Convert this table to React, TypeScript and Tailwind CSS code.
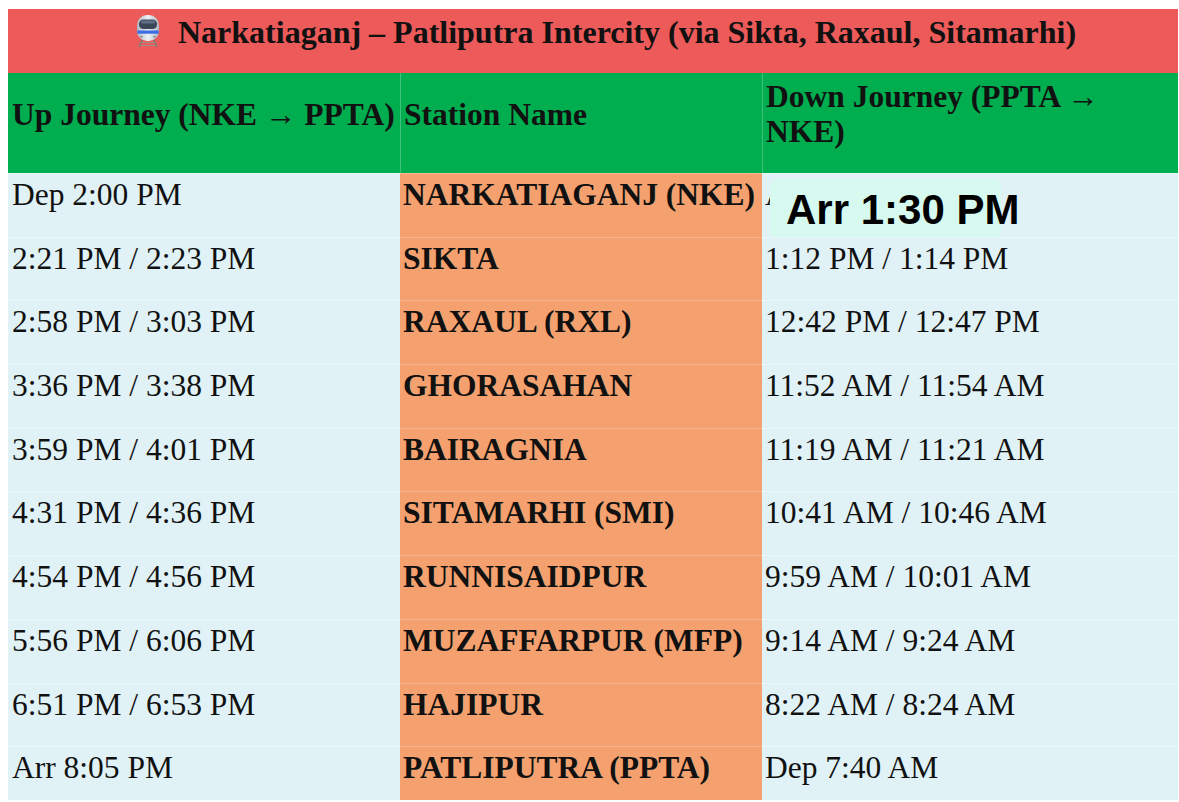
const rows: [string, string, string][] = [
  ["Dep 2:00 PM", "NARKATIAGANJ (NKE)", "Arr 1:30 PM"],
  ["2:21 PM / 2:23 PM", "SIKTA", "1:12 PM / 1:14 PM"],
  ["2:58 PM / 3:03 PM", "RAXAUL (RXL)", "12:42 PM / 12:47 PM"],
  ["3:36 PM / 3:38 PM", "GHORASAHAN", "11:52 AM / 11:54 AM"],
  ["3:59 PM / 4:01 PM", "BAIRAGNIA", "11:19 AM / 11:21 AM"],
  ["4:31 PM / 4:36 PM", "SITAMARHI (SMI)", "10:41 AM / 10:46 AM"],
  ["4:54 PM / 4:56 PM", "RUNNISAIDPUR", "9:59 AM / 10:01 AM"],
  ["5:56 PM / 6:06 PM", "MUZAFFARPUR (MFP)", "9:14 AM / 9:24 AM"],
  ["6:51 PM / 6:53 PM", "HAJIPUR", "8:22 AM / 8:24 AM"],
  ["Arr 8:05 PM", "PATLIPUTRA (PPTA)", "Dep 7:40 AM"],
];

function TrainIcon() {
  return (
    <svg width="36" height="36" viewBox="0 0 36 36" className="shrink-0">
      <defs>
        <linearGradient id="body" x1="0" y1="0" x2="1" y2="0">
          <stop offset="0" stopColor="#aeb7c1" />
          <stop offset="0.5" stopColor="#eef1f4" />
          <stop offset="1" stopColor="#aeb7c1" />
        </linearGradient>
      </defs>
      {/* rails */}
      <path d="M9 34 L12 27 M27 34 L24 27" stroke="#7d7167" strokeWidth="1.6" />
      <path d="M10 29.5 H26 M9 32.5 H27" stroke="#9b8f84" strokeWidth="1.2" />
      {/* body */}
      <rect x="7" y="2" width="22" height="26" rx="10" fill="url(#body)" />
      <rect x="9" y="6.5" width="18" height="9.5" rx="4.5" fill="#3a4757" />
      <rect x="11" y="7.5" width="14" height="3" rx="1.5" fill="#5d6f84" />
      <rect x="7.3" y="17.5" width="21.4" height="3.2" fill="#3b6ee6" />
      <rect x="10" y="23" width="3" height="1.6" rx="0.8" fill="#7f8a96" />
      <rect x="23" y="23" width="3" height="1.6" rx="0.8" fill="#7f8a96" />
    </svg>
  );
}

export default function App() {
  return (
    <div className="h-[802px] w-[1179px] bg-white pt-[9px] pl-[8px] text-[#111] [font-family:'Liberation_Serif','Times_New_Roman',serif]">
      <div className="grid h-[791px] w-[1170px] grid-cols-[392px_362px_416px] content-start overflow-hidden">
        <div className="col-span-3 flex h-[64px] items-start justify-center gap-[12px] bg-[#ec5a59] pt-[4px] pl-[20px] text-[32px] font-bold">
          <TrainIcon />
          <span className="leading-[38px]">
            Narkatiaganj – Patliputra Intercity (via Sikta, Raxaul, Sitamarhi)
          </span>
        </div>

        <div className="flex h-[100px] items-center bg-[#00ad4f] pb-[16px] pl-[4px] text-[31.5px] leading-[34px] font-bold whitespace-nowrap">
          Up Journey (NKE → PPTA)
        </div>
        <div className="flex h-[100px] items-center border-l border-white/25 bg-[#00ad4f] pb-[16px] pl-[3px] text-[31.5px] leading-[34px] font-bold">
          Station Name
        </div>
        <div className="h-[100px] border-l border-white/25 bg-[#00ad4f] pt-[6px] pl-[3px] pr-[40px] text-[31.5px] leading-[35px] font-bold">
          Down Journey (PPTA → NKE)
        </div>

        {rows.map(([up, station, down], i) => (
          <div key={station} className="contents">
            <div className="h-[63.7px] border-t border-[#eaf7fa] bg-[#e0f2f6] pt-[3px] pl-[4px] text-[31.5px] leading-[35px] whitespace-nowrap">
              {up}
            </div>
            <div className="h-[63.7px] border-t border-[#f7b690] bg-[#f4a16f] pt-[3px] pl-[3px] text-[31.5px] leading-[35px] font-bold whitespace-nowrap">
              {station}
            </div>
            <div className="relative h-[63.7px] border-t border-[#eaf7fa] bg-[#e0f2f6] pt-[3px] pl-[3px] text-[31.5px] leading-[35px] whitespace-nowrap">
              {down}
              {i === 0 ? (
                <div className="absolute top-[5px] left-[8px] flex h-[61px] w-[231px] items-center rounded-[8px] bg-[#d6faef] pl-[16px] text-[42px] font-bold whitespace-nowrap text-black [font-family:'Liberation_Sans',Arial,sans-serif]">
                  Arr 1:30 PM
                </div>
              ) : null}
            </div>
          </div>
        ))}
      </div>
    </div>
  );
}
